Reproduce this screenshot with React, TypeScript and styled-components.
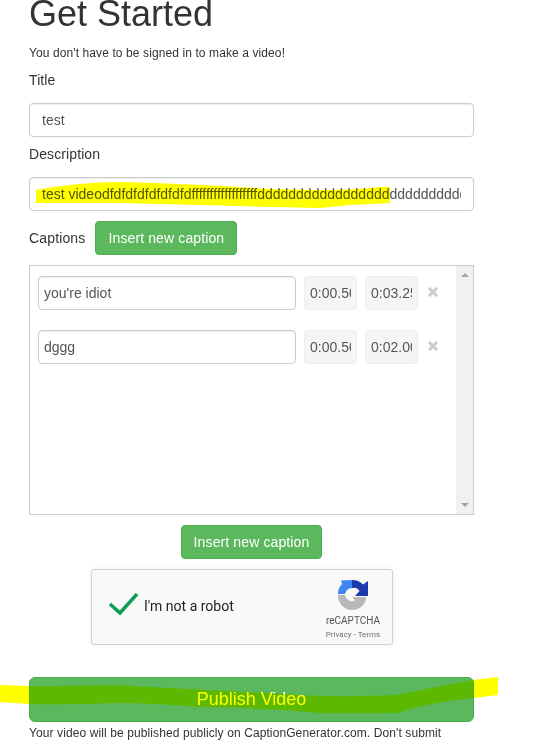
import styled, { createGlobalStyle } from "styled-components";

const GlobalStyle = createGlobalStyle`
    html, body {
        margin: 0;
        padding: 0;
        background: #fff;
    }
`;

const Page = styled.div`
    position: relative;
    width: 540px;
    height: 747px;
    overflow: hidden;
    padding-left: 29px;
    box-sizing: border-box;
    font-family: "Liberation Sans", Arial, sans-serif;
    font-size: 14px;
    line-height: 20px;
    color: #333;
`;

const Form = styled.div`
    width: 445px;
    display: flex;
    flex-direction: column;
    align-items: flex-start;
`;

const Heading = styled.h1`
    margin: -6px 0 0;
    font-size: 36px;
    font-weight: 500;
    line-height: 40px;
`;

const Small = styled.p<{ $top: number }>`
    margin: ${(p) => p.$top}px 0 0;
    font-size: 12px;
    line-height: 17px;
    letter-spacing: 0.1px;
    white-space: nowrap;
`;

const Label = styled.label<{ $top: number }>`
    display: block;
    margin: ${(p) => p.$top}px 0 13px;
    letter-spacing: 0.1px;
`;

const TextInput = styled.input`
    display: block;
    width: 100%;
    height: 34px;
    box-sizing: border-box;
    padding: 6px 12px;
    border: 1px solid #ccc;
    border-radius: 4px;
    box-shadow: inset 0 1px 1px rgba(0, 0, 0, 0.075);
    background: #fff;
    color: #555;
    font: 14px/20px "Liberation Sans", Arial, sans-serif;
    outline: none;
`;

const CaptionsHeader = styled.div`
    display: flex;
    align-items: center;
    gap: 10px;
    margin-top: 10px;
    letter-spacing: 0.15px;
`;

const Button = styled.button<{ $large?: boolean }>`
    display: block;
    box-sizing: border-box;
    height: ${(p) => (p.$large ? "45px" : "34px")};
    width: ${(p) => (p.$large ? "100%" : "auto")};
    padding: ${(p) => (p.$large ? "5px 12px 7px" : "6px 12px")};
    border: 1px solid #4cae4c;
    border-radius: ${(p) => (p.$large ? "6px" : "4px")};
    background: #5cb85c;
    color: #fff;
    font: ${(p) => (p.$large ? "18px" : "14px")} / 20px "Liberation Sans", Arial, sans-serif;
    letter-spacing: ${(p) => (p.$large ? "0" : "0.12px")};
`;

const CaptionBox = styled.div`
    display: flex;
    width: 100%;
    height: 250px;
    box-sizing: border-box;
    margin-top: 10px;
    border: 1px solid #ccc;
`;

const CaptionList = styled.div`
    flex: 1;
    display: flex;
    flex-direction: column;
    gap: 20px;
    padding: 10px 0 0 8px;
`;

const CaptionRow = styled.div`
    display: flex;
    align-items: center;
`;

const CaptionInput = styled(TextInput)`
    width: 258px;
    padding: 6px 5px;
`;

const TimeInput = styled(TextInput)`
    width: 53px;
    margin-left: 8px;
    padding: 6px 5px;
    border-color: #eee;
    box-shadow: none;
    background: #f5f5f5;
`;

const RemoveIcon = styled.svg`
    width: 10px;
    height: 10px;
    margin: -2px 0 0 10px;
`;

const Scrollbar = styled.div`
    width: 17px;
    background: #f1f1f1;
    display: flex;
    flex-direction: column;
    justify-content: space-between;
    align-items: center;
    padding: 7px 0;
    box-sizing: border-box;
`;

const Arrow = styled.div<{ $down?: boolean }>`
    width: 0;
    height: 0;
    border-left: 4px solid transparent;
    border-right: 4px solid transparent;
    ${(p) => (p.$down ? "border-top: 4px solid #a3a3a3;" : "border-bottom: 4px solid #a3a3a3;")}
`;

const CenterRow = styled.div`
    display: flex;
    justify-content: center;
    width: 100%;
    margin-top: 10px;
`;

const Captcha = styled.div`
    display: flex;
    align-items: center;
    box-sizing: border-box;
    width: 302px;
    height: 76px;
    margin: 10px 0 0 62px;
    border: 1px solid #d3d3d3;
    border-radius: 3px;
    background: #f9f9f9;
    box-shadow: 0 0 4px rgba(0, 0, 0, 0.08);
    font-family: Roboto, "Liberation Sans", sans-serif;
`;

const CheckMark = styled.svg`
    width: 32px;
    height: 26px;
    margin: 0 0 3px 16px;
`;

const CaptchaLabel = styled.span`
    flex: 1;
    margin: 0 0 2px 4px;
    font-size: 14px;
    color: #222;
`;

const CaptchaBrand = styled.div`
    width: 68px;
    margin-right: 5px;
    display: flex;
    flex-direction: column;
    align-items: center;
    color: #555;
`;

const CaptchaLogo = styled.svg`
    width: 32px;
    height: 32px;
    margin-top: 6px;
`;

const BrandName = styled.div`
    font-size: 10px;
    line-height: 12px;
    margin-top: 3px;
`;

const BrandLinks = styled.div`
    font-size: 8px;
    line-height: 10px;
    margin-top: 3px;
    color: #6f6f6f;
`;

const PublishRow = styled.div`
    width: 100%;
    margin-top: 32px;
`;

const Highlight = styled.svg`
    position: absolute;
    left: 0;
    top: 0;
    width: 540px;
    height: 747px;
    pointer-events: none;
    mix-blend-mode: multiply;
`;

const captions = [
    { text: "you're idiot", start: "0:00.500", end: "0:03.250" },
    { text: "dggg", start: "0:00.500", end: "0:02.000" },
];

export default function App() {
    return (
        <Page>
            <GlobalStyle />
            <Form>
                <Heading>Get Started</Heading>
                <Small $top={11}>You don't have to be signed in to make a video!</Small>
                <Label $top={8}>Title</Label>
                <TextInput readOnly value="test" />
                <Label $top={7}>Description</Label>
                <TextInput readOnly value="test videodfdfdfdfdfdfdfdffffffffffffffffffdddddddddddddddddddddddddddddddd" />
                <CaptionsHeader>
                    <span>Captions</span>
                    <Button>Insert new caption</Button>
                </CaptionsHeader>
                <CaptionBox>
                    <CaptionList>
                        {captions.map((c) => (
                            <CaptionRow key={c.text}>
                                <CaptionInput readOnly value={c.text} />
                                <TimeInput readOnly value={c.start} />
                                <TimeInput readOnly value={c.end} />
                                <RemoveIcon viewBox="0 0 10 10">
                                    <path d="M1 1 9 9M9 1 1 9" stroke="#ccc" strokeWidth="3" fill="none" />
                                </RemoveIcon>
                            </CaptionRow>
                        ))}
                    </CaptionList>
                    <Scrollbar>
                        <Arrow />
                        <Arrow $down />
                    </Scrollbar>
                </CaptionBox>
                <CenterRow>
                    <Button>Insert new caption</Button>
                </CenterRow>
                <Captcha>
                    <CheckMark viewBox="0 0 32 26">
                        <path d="M2 11 12 20 29 1" stroke="#0f9d58" strokeWidth="3.5" fill="none" />
                    </CheckMark>
                    <CaptchaLabel>I'm not a robot</CaptchaLabel>
                    <CaptchaBrand>
                        <CaptchaLogo viewBox="0 0 32 32">
                            <path d="M1 14 A14 14 0 0 1 5 4 L4 0.5 L15 0 L15 8 A7 7 0 0 0 8 14 Z" fill="#3f86f2" />
                            <path d="M15 0 A15 15 0 0 1 26 4.5 L31 1 L31 16 L18 16 L22.5 11 A7 7 0 0 0 15 8 Z" fill="#1c3aa9" />
                            <path d="M1 15 L8 15 A7 7 0 0 0 18 20.5 L15 17 L29 17 A14 13 0 0 1 15 30 A14.5 14.5 0 0 1 1 15 Z" fill="#b8b8b8" />
                        </CaptchaLogo>
                        <BrandName>reCAPTCHA</BrandName>
                        <BrandLinks>Privacy - Terms</BrandLinks>
                    </CaptchaBrand>
                </Captcha>
                <PublishRow>
                    <Button $large>Publish Video</Button>
                </PublishRow>
                <Small $top={3}>Your video will be published publicly on CaptionGenerator.com. Don't submit</Small>
            </Form>
            <Highlight viewBox="0 0 540 747">
                <path
                    d="M36 190 Q80 182 120 182 Q200 184 270 189 L320 190 Q360 190 378 187 L390 187 L390 203 L350 205 L320 208 Q270 207 200 205 L120 203 L36 203 Z"
                    fill="#ff0"
                />
                <path
                    d="M0 685 L29 686 Q80 686 115 685 Q200 690 270 693 Q320 698 397 695 Q440 686 473 680 L498 677 L498 695 L473 698 Q430 702 397 713 L320 713 Q270 708 200 707 Q150 703 115 703 Q70 705 29 704 L0 702 Z"
                    fill="#ff0"
                />
            </Highlight>
        </Page>
    );
}
